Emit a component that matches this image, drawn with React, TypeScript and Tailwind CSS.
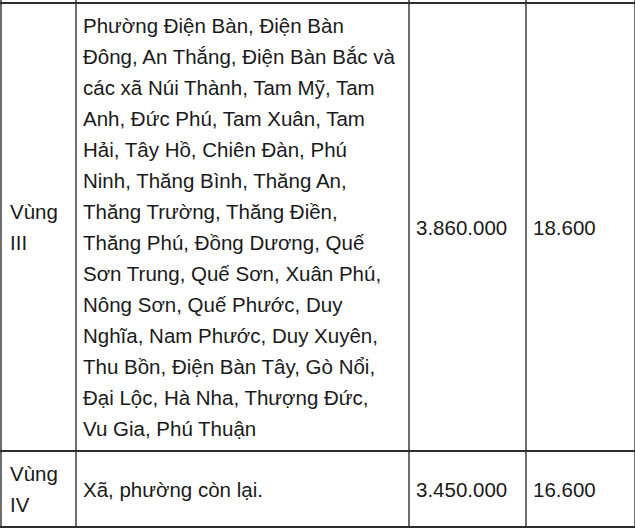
const REGION_III = [
  "Phường Điện Bàn, Điện Bàn",
  "Đông, An Thắng, Điện Bàn Bắc và",
  "các xã Núi Thành, Tam Mỹ, Tam",
  "Anh, Đức Phú, Tam Xuân, Tam",
  "Hải, Tây Hồ, Chiên Đàn, Phú",
  "Ninh, Thăng Bình, Thăng An,",
  "Thăng Trường, Thăng Điền,",
  "Thăng Phú, Đồng Dương, Quế",
  "Sơn Trung, Quế Sơn, Xuân Phú,",
  "Nông Sơn, Quế Phước, Duy",
  "Nghĩa, Nam Phước, Duy Xuyên,",
  "Thu Bồn, Điện Bàn Tây, Gò Nổi,",
  "Đại Lộc, Hà Nha, Thượng Đức,",
  "Vu Gia, Phú Thuận",
];

const cell =
  "border-2 border-x-[#6e6e6e] border-y-[#2e2e2e] px-[6px] py-[6px] align-middle";
const first = `${cell} pl-[8px]`;
const tail = "border-2 border-t-0 border-x-[#6e6e6e] border-b-[#2e2e2e] p-0";

export default function App() {
  return (
    <div className="h-[529px] w-[635px] overflow-hidden bg-white font-['Liberation_Sans',Arial,sans-serif] text-[20.5px] leading-[31px] text-[#1a1a1a]">
      <table className="w-[634px] table-fixed border-collapse">
        <colgroup>
          <col className="w-[75px]" />
          <col className="w-[333px]" />
          <col className="w-[117px]" />
          <col className="w-[109px]" />
        </colgroup>
        <tbody>
          {/* tail of the previous row */}
          <tr className="h-[3px]">
            <td className={tail} />
            <td className={tail} />
            <td className={tail} />
            <td className={tail} />
          </tr>
          <tr>
            <td className={first}>
              Vùng
              <br />
              III
            </td>
            <td className={`${cell} whitespace-nowrap`}>
              {REGION_III.map((line) => (
                <div key={line}>{line}</div>
              ))}
            </td>
            <td className={cell}>3.860.000</td>
            <td className={cell}>18.600</td>
          </tr>
          <tr>
            <td className={first}>
              Vùng
              <br />
              IV
            </td>
            <td className={cell}>Xã, phường còn lại.</td>
            <td className={cell}>3.450.000</td>
            <td className={cell}>16.600</td>
          </tr>
        </tbody>
      </table>
    </div>
  );
}
